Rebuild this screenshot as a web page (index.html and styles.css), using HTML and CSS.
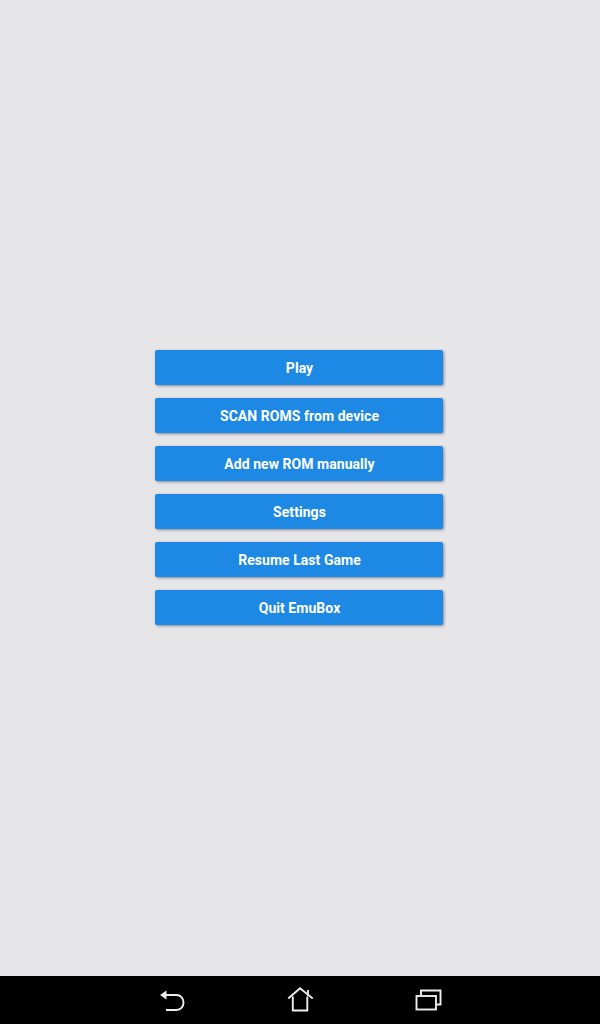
FILE: index.html
```html
<!DOCTYPE html>
<html lang="en">
<head>
  <meta charset="UTF-8">
  <title>EmuBox</title>
  <link rel="stylesheet" href="styles.css">
</head>
<body>
  <div class="screen">
    <div class="menu">
      <div class="menuBtn">Play</div>
      <div class="menuBtn">SCAN ROMS from device</div>
      <div class="menuBtn">Add new ROM manually</div>
      <div class="menuBtn">Settings</div>
      <div class="menuBtn">Resume Last Game</div>
      <div class="menuBtn">Quit EmuBox</div>
    </div>
  </div>
  <div class="navBar">
    <svg class="navIcon" viewBox="0 0 36 36">
      <path class="navFill" d="M6 13 12.5 8.5V17.5Z"/>
      <path d="M12 13H22.5C26.5 13 29.5 16 29.5 20.5C29.5 25 26.5 28 22.5 28H12"/>
    </svg>
    <svg class="navIcon" viewBox="0 0 36 36">
      <path d="M6.3 16.5 18 6.3 30.7 16.5"/>
      <path d="M10.8 14.5V28.5H25.3V14.5"/>
      <path d="M26 8V14"/>
    </svg>
    <svg class="navIcon" viewBox="0 0 36 36">
      <rect x="6.5" y="14" width="19.5" height="13.5"/>
      <path d="M11 13.5V8.5H30.5V22.5H27"/>
    </svg>
  </div>
</body>
</html>
```

FILE: styles.css
```css
html, body {
  margin: 0;
  height: 100%;
}
body {
  display: flex;
  flex-direction: column;
  background-color: #e6e6e8;
  font-family: Roboto, "Liberation Sans", sans-serif;
}
.screen {
  flex: 1;
  display: flex;
  justify-content: center;
  align-items: center;
  padding-bottom: 1px;
}
.menu {
  display: flex;
  flex-direction: column;
  gap: 13px;
  width: 288px;
  margin-right: 2px;
}
.menuBtn {
  height: 35px;
  line-height: 37px;
  padding-left: 1px;
  text-align: center;
  font-size: 14px;
  font-weight: 700;
  letter-spacing: 0.05px;
  color: #fff;
  background-color: #1e88e5;
  border-radius: 2px;
  box-shadow: 1px 1px 3px rgba(60, 70, 90, 0.6);
}
.navBar {
  height: 48px;
  background-color: #000;
  display: flex;
  justify-content: center;
  align-items: center;
  gap: 92px;
}
.navIcon {
  width: 36px;
  height: 36px;
  fill: none;
  stroke: #eee;
  stroke-width: 1.9;
}
.navIcon .navFill {
  fill: #eee;
  stroke: none;
}
```
